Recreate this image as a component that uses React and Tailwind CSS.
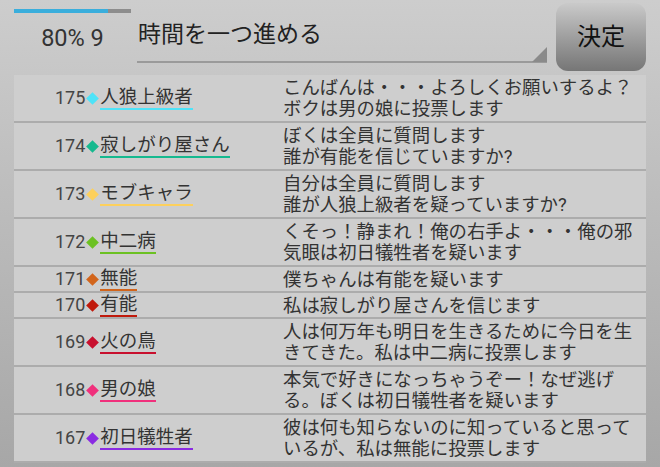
import React from 'react';

const rows = [
  { no: 175, name: '人狼上級者', color: '#4ee3f8', lines: ['こんばんは・・・よろしくお願いするよ？', 'ボクは男の娘に投票します'] },
  { no: 174, name: '寂しがり屋さん', color: '#16b98f', lines: ['ぼくは全員に質問します', '誰が有能を信じていますか?'] },
  { no: 173, name: 'モブキャラ', color: '#fdd05c', lines: ['自分は全員に質問します', '誰が人狼上級者を疑っていますか?'] },
  { no: 172, name: '中二病', color: '#6cc123', lines: ['くそっ！静まれ！俺の右手よ・・・俺の邪', '気眼は初日犠牲者を疑います'] },
  { no: 171, name: '無能', color: '#d2651c', lines: ['僕ちゃんは有能を疑います'] },
  { no: 170, name: '有能', color: '#c01a0c', lines: ['私は寂しがり屋さんを信じます'] },
  { no: 169, name: '火の鳥', color: '#c8102e', lines: ['人は何万年も明日を生きるために今日を生', 'きてきた。私は中二病に投票します'] },
  { no: 168, name: '男の娘', color: '#f0307c', lines: ['本気で好きになっちゃうぞー！なぜ逃げ', 'る。ぼくは初日犠牲者を疑います'] },
  { no: 167, name: '初日犠牲者', color: '#8a2be2', lines: ['彼は何も知らないのに知っていると思って', 'いるが、私は無能に投票します'] },
];

const font = { fontFamily: 'Roboto, "Noto Sans CJK JP", sans-serif' };

export default function App() {
  return (
    <div
      className="w-[660px] h-[467px] overflow-hidden bg-gradient-to-b from-[#cdcdcd] to-[#a7a7a7] text-[#333]"
      style={font}
    >
      {/* header */}
      <div className="flex h-[75px]">
        <div className="w-[117px] ml-[14px] flex flex-col">
          <div className="mt-[9px] h-[4px] w-full bg-[#8d8d8d]">
            <div className="h-full w-[80%] bg-[#3aaedc]" />
          </div>
          <div className="mt-[10px] text-center text-[23.5px] leading-[30px] text-[#333]">80% 9</div>
        </div>
        <div className="ml-[6px] w-[410px] relative">
          <div className="pt-[19px] pl-[1px] text-[23px] leading-[32px] text-[#222]">時間を一つ進める</div>
          <div className="absolute left-0 right-0 top-[61px] h-[2px] bg-[#9a9a9a]" />
          <div className="absolute right-0 top-[47px] w-0 h-0 border-l-[15px] border-l-transparent border-b-[15px] border-b-[#8a8a8a]" />
        </div>
        <div className="ml-[9px] mt-[3px] w-[90px] h-[68px] rounded-[12px] bg-gradient-to-b from-[#cacaca] to-[#767676] flex items-center justify-center text-[24px] text-[#111]">
          決定
        </div>
      </div>

      {/* list */}
      <div className="ml-[14px] w-[632px] bg-[#cecece]">
        {rows.map((r) => (
          <div
            key={r.no}
            className={`flex border-b-2 border-[#acacac] ${r.lines.length > 1 ? 'h-[48px]' : 'h-[26px]'}`}
          >
            <div className="w-[269px] pl-[41px] flex items-center text-[18px] text-[#444]">
              <span className="leading-[22px]">{r.no}</span>
              <span
                className="w-[9px] h-[9px] rotate-45 mx-[3px]"
                style={{ backgroundColor: r.color }}
              />
              <span
                className="leading-[22px] border-b-2 text-[18.5px] text-[#333]"
                style={{ borderColor: r.color }}
              >
                {r.name}
              </span>
            </div>
            <div className="flex flex-col justify-center text-[18.4px] leading-[21px] text-[#333] whitespace-nowrap">
              {r.lines.map((l, i) => (
                <div key={i}>{l}</div>
              ))}
            </div>
          </div>
        ))}
      </div>
    </div>
  );
}
